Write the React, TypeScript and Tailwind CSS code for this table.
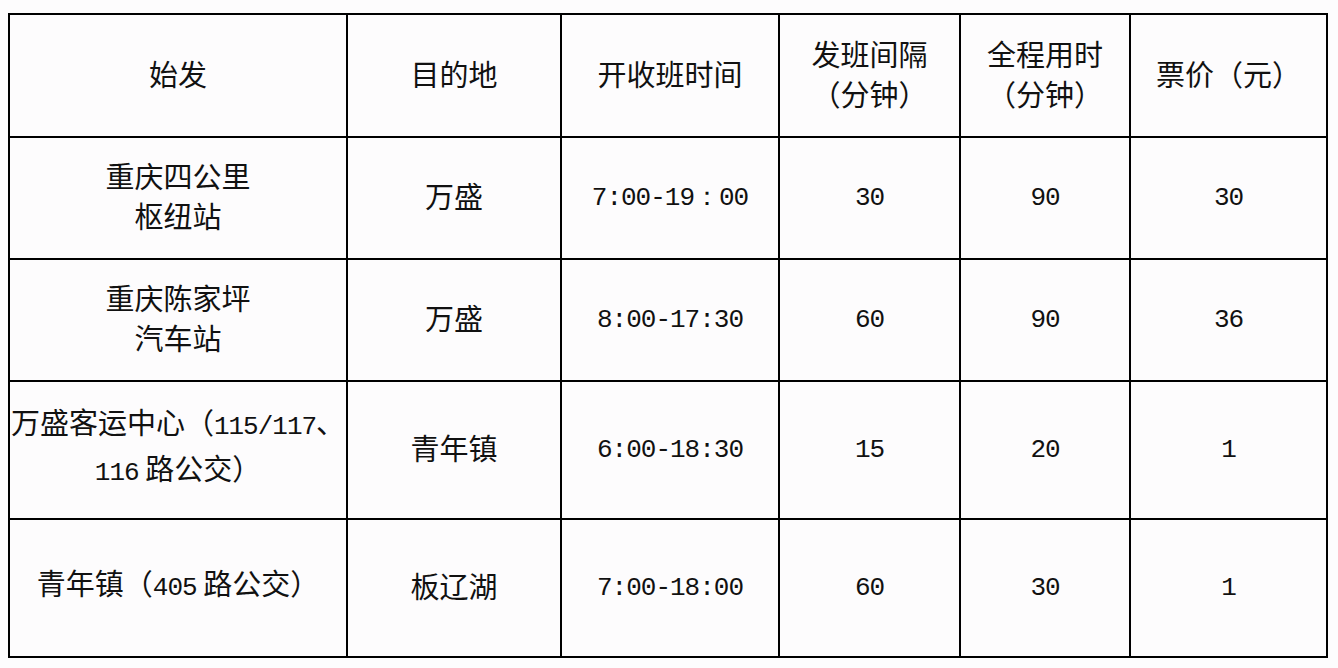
import React from "react";

const cjk = { fontFamily: '"Noto Sans CJK SC", "Noto Sans", sans-serif' };

const Num = ({ children }: { children: React.ReactNode }) => (
  <span className="font-['Liberation_Mono',monospace] text-[26px] tracking-[-1px]">{children}</span>
);

const Cell = ({ children }: { children: React.ReactNode }) => (
  <div className="bg-[#fdfcfd] flex items-center justify-center pb-[6px] text-center whitespace-nowrap leading-[40px] text-[29px] text-[#111]">
    <div>{children}</div>
  </div>
);

const rows: React.ReactNode[][] = [
  [
    <>重庆四公里<br />枢纽站</>,
    "万盛",
    <Num>7:00-19：00</Num>,
    <Num>30</Num>,
    <Num>90</Num>,
    <Num>30</Num>,
  ],
  [
    <>重庆陈家坪<br />汽车站</>,
    "万盛",
    <Num>8:00-17:30</Num>,
    <Num>60</Num>,
    <Num>90</Num>,
    <Num>36</Num>,
  ],
  [
    <>
      万盛客运中心（<Num>115/117</Num>、<br />
      <Num>116</Num> 路公交）
    </>,
    "青年镇",
    <Num>6:00-18:30</Num>,
    <Num>15</Num>,
    <Num>20</Num>,
    <Num>1</Num>,
  ],
  [
    <>青年镇（<Num>405</Num> 路公交）</>,
    "板辽湖",
    <Num>7:00-18:00</Num>,
    <Num>60</Num>,
    <Num>30</Num>,
    <Num>1</Num>,
  ],
];

export default function App() {
  return (
    <div className="w-[1338px] h-[668px] bg-[#fdfcfd] overflow-hidden pt-[13px] pl-[8px]" style={cjk}>
      <div className="inline-grid bg-black p-[2px] gap-[2px] grid-cols-[336px_212px_216px_179px_168px_195px] grid-rows-[121px_120px_120px_136px_136px]">
        <Cell>始发</Cell>
        <Cell>目的地</Cell>
        <Cell>开收班时间</Cell>
        <Cell>发班间隔<br />（分钟）</Cell>
        <Cell>全程用时<br />（分钟）</Cell>
        <Cell>票价（元）</Cell>
        {rows.map((r, i) =>
          r.map((c, j) => <Cell key={`${i}-${j}`}>{c}</Cell>)
        )}
      </div>
    </div>
  );
}
